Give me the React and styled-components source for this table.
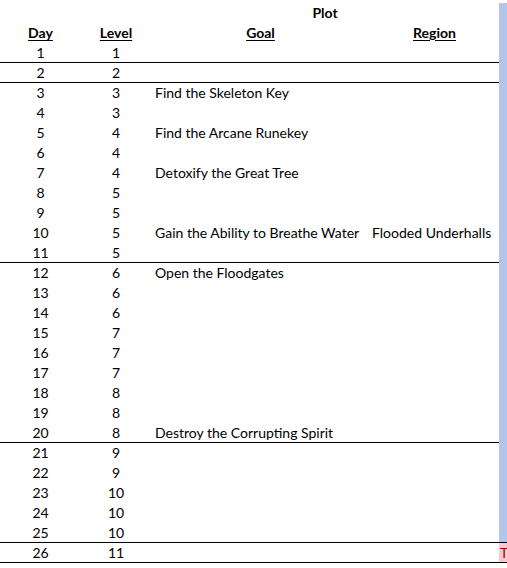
import React from "react"
import styled, { createGlobalStyle } from "styled-components"

const GlobalStyle = createGlobalStyle`
  body {
    margin: 0;
    background: #ffffff;
    font-family: Lato, "Liberation Sans", sans-serif;
    font-size: 14px;
    color: #000000;
  }
`

const Sheet = styled.div`
  width: 507px;
  padding-top: 3px;
`

const Row = styled.div`
  display: grid;
  grid-template-columns: 81px 70px 219px 129px 1fr;
  height: 20px;
`

const Cell = styled.div`
  box-sizing: border-box;
  height: 20px;
  line-height: 19px;
  white-space: nowrap;
  overflow: visible;
  text-align: ${props => props.$align || "center"};
  padding-left: ${props => props.$indent || 0}px;
  font-weight: ${props => (props.$head ? 700 : 400)};
  border-bottom: ${props => (props.$rule ? "1px solid #000" : "none")};
  grid-column: ${props => props.$span || "auto"};
`

const HeadLabel = styled.span`
  text-decoration: underline;
  text-underline-offset: 2px;
`

const Side = styled.div`
  box-sizing: border-box;
  height: 20px;
  line-height: 19px;
  padding-left: 1px;
  overflow: hidden;
  background: ${props => (props.$bad ? "#ffc7ce" : "#b4c6e7")};
  color: #9c0006;
  border-bottom: ${props => (props.$rule ? "1px solid #000" : "none")};
`

const days = [
  { day: 1, level: 1, rule: true },
  { day: 2, level: 2, rule: true },
  { day: 3, level: 3, goal: "Find the Skeleton Key" },
  { day: 4, level: 3 },
  { day: 5, level: 4, goal: "Find the Arcane Runekey" },
  { day: 6, level: 4 },
  { day: 7, level: 4, goal: "Detoxify the Great Tree" },
  { day: 8, level: 5 },
  { day: 9, level: 5 },
  { day: 10, level: 5, goal: "Gain the Ability to Breathe Water", region: "Flooded Underhalls" },
  { day: 11, level: 5, rule: true },
  { day: 12, level: 6, goal: "Open the Floodgates" },
  { day: 13, level: 6 },
  { day: 14, level: 6 },
  { day: 15, level: 7 },
  { day: 16, level: 7 },
  { day: 17, level: 7 },
  { day: 18, level: 8 },
  { day: 19, level: 8 },
  { day: 20, level: 8, goal: "Destroy the Corrupting Spirit", rule: true },
  { day: 21, level: 9 },
  { day: 22, level: 9 },
  { day: 23, level: 10 },
  { day: 24, level: 10 },
  { day: 25, level: 10, rule: true, full: true },
  { day: 26, level: 11, rule: true, full: true, bad: "T" },
]

const App = () => {
  return (
    <Sheet>
      <GlobalStyle />
      <Row>
        <Cell />
        <Cell />
        <Cell $head $span="span 2">Plot</Cell>
        <Side />
      </Row>
      <Row>
        <Cell $head><HeadLabel>Day</HeadLabel></Cell>
        <Cell $head><HeadLabel>Level</HeadLabel></Cell>
        <Cell $head><HeadLabel>Goal</HeadLabel></Cell>
        <Cell $head><HeadLabel>Region</HeadLabel></Cell>
        <Side />
      </Row>
      {days.map(d => (
        <Row key={d.day}>
          <Cell $rule={d.rule}>{d.day}</Cell>
          <Cell $rule={d.rule}>{d.level}</Cell>
          <Cell $rule={d.rule} $align="left" $indent={4}>{d.goal}</Cell>
          <Cell $rule={d.rule} $align="left" $indent={2}>{d.region}</Cell>
          <Side $rule={d.full} $bad={!!d.bad}>{d.bad}</Side>
        </Row>
      ))}
    </Sheet>
  )
}

export default App
